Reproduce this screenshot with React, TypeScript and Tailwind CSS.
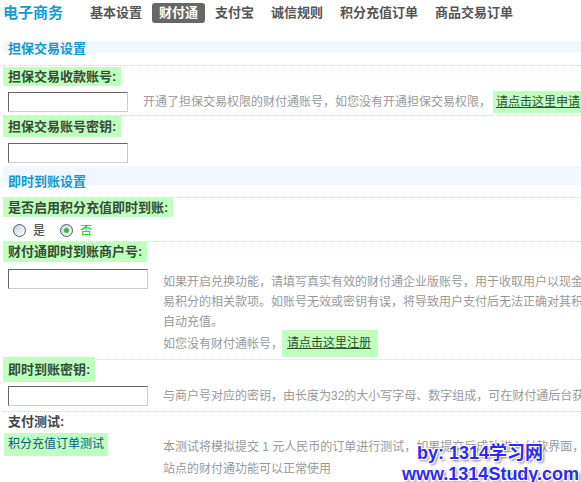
import React from "react";

const font = { fontFamily: '"Liberation Sans", "Noto Sans CJK SC", sans-serif' };

const tabs = ["基本设置", "财付通", "支付宝", "诚信规则", "积分充值订单", "商品交易订单"];

function Radio({ checked }: { checked?: boolean }) {
  return (
    <span className="flex h-[13px] w-[13px] items-center justify-center rounded-full border border-[#3f5c7a] bg-[linear-gradient(135deg,#c9d1da,#ffffff)]">
      {checked && <span className="h-[5px] w-[5px] rounded-full bg-[#34b834]" />}
    </span>
  );
}

function Input({ w }: { w: string }) {
  return (
    <input
      className={`${w} h-[20px] shrink-0 border border-t-[#666] border-l-[#666] border-r-[#ccc] border-b-[#ccc] bg-white outline-none`}
    />
  );
}

export default function App() {
  return (
    <div
      className="relative h-[482px] w-[581px] overflow-hidden bg-white text-[12px] text-[#999]"
      style={font}
    >
      {/* top bar */}
      <div className="flex items-start pt-[3px]">
        <div className="ml-[3px] text-[15px] font-bold leading-[20px] text-[#159ad2]">电子商务</div>
        <div className="ml-[20px] flex gap-[3px]">
          {tabs.map((t) => (
            <div
              key={t}
              className={`h-[20px] rounded-[3px] px-[7px] text-[13px] font-bold leading-[20px] ${
                t === "财付通" ? "bg-[#676767] text-white" : "text-[#555]"
              }`}
            >
              {t}
            </div>
          ))}
        </div>
      </div>

      <div className="ml-[3px]">
        {/* 担保交易设置 */}
        <div className="mt-[18px] h-[12px] bg-[#f2f7ff] pl-[5px]">
          <div className="whitespace-nowrap text-[13px] font-bold leading-[16px] text-[#1199cf]">担保交易设置</div>
        </div>

        <div className="mt-[12px] border-t border-dotted border-[#c6dcef]">
          <div className="mt-[1px] h-[19px] w-fit bg-[#c0ffc0] px-[5px] text-[13px] font-bold leading-[19px] text-[#354d35]">
            担保交易收款账号:
          </div>
          <div className="mt-[6px] flex h-[20px] items-center whitespace-nowrap">
            <div className="ml-[5px]">
              <Input w="w-[120px]" />
            </div>
            <span className="ml-[15px]">开通了担保交易权限的财付通账号，如您没有开通担保交易权限，</span>
            <span className="ml-[2px] h-[22px] bg-[#c0ffc0] px-[3px] leading-[22px] text-[#2f4f2f] underline">
              请点击这里申请
            </span>
          </div>
        </div>

        <div className="mt-[3px] border-t border-dotted border-[#c6dcef]">
          <div className="h-[21px] w-fit bg-[#c0ffc0] px-[5px] text-[13px] font-bold leading-[21px] text-[#354d35]">
            担保交易账号密钥:
          </div>
          <div className="ml-[5px] mt-[6px] flex">
            <Input w="w-[120px]" />
          </div>
        </div>

        {/* 即时到账设置 */}
        <div className="mt-[3px] h-[19px] bg-[#f2f7ff] pl-[5px]">
          <div className="whitespace-nowrap pt-[9px] text-[13px] font-bold leading-[13px] text-[#1199cf]">即时到账设置</div>
        </div>

        <div className="mt-[12px] border-t border-dotted border-[#c6dcef]">
          <div className="h-[19px] w-fit bg-[#c0ffc0] px-[5px] text-[13px] font-bold leading-[19px] text-[#354d35]">
            是否启用积分充值即时到账:
          </div>
          <div className="flex h-[24px] items-center pt-[3px]">
            <span className="ml-[10px]">
              <Radio />
            </span>
            <span className="ml-[7px] text-[#333]">是</span>
            <span className="ml-[15px]">
              <Radio checked />
            </span>
            <span className="ml-[7px] text-[#00cc00]">否</span>
          </div>
        </div>

        <div className="border-t border-dotted border-[#c6dcef]">
          <div className="h-[20px] w-fit bg-[#c0ffc0] px-[5px] text-[13px] font-bold leading-[20px] text-[#354d35]">
            财付通即时到账商户号:
          </div>
          <div className="mt-[7px] flex items-start whitespace-nowrap">
            <div className="flex w-[160px] shrink-0 pl-[5px]">
              <Input w="w-[140px]" />
            </div>
            <div>
              <div className="mt-[3px] leading-[20px]">
                如果开启兑换功能，请填写真实有效的财付通企业版账号，用于收取用户以现金兑换交
                <br />
                易积分的相关款项。如账号无效或密钥有误，将导致用户支付后无法正确对其积分账户进行
                <br />
                自动充值。
              </div>
              <div className="-mt-[2px] flex h-[27px] items-center">
                <span>如您没有财付通帐号，</span>
                <span className="-ml-[1px] h-[27px] bg-[#c0ffc0] pl-[5px] pr-[7px] leading-[27px] text-[#2f4f2f] underline">
                  请点击这里注册
                </span>
              </div>
            </div>
          </div>
        </div>

        <div className="mt-[2px] border-t border-dotted border-[#c6dcef]">
          <div className="-mt-[3px] h-[25px] w-fit bg-[#c0ffc0] px-[5px] text-[13px] font-bold leading-[25px] text-[#354d35]">
            即时到账密钥:
          </div>
          <div className="mt-[4px] flex h-[20px] items-center whitespace-nowrap">
            <div className="flex w-[160px] shrink-0 pl-[5px]">
              <Input w="w-[140px]" />
            </div>
            <span>与商户号对应的密钥，由长度为32的大小写字母、数字组成，可在财付通后台获取</span>
          </div>
        </div>

        <div className="mt-[5px] border-t border-dotted border-[#c6dcef]">
          <div className="h-[20px] px-[5px] text-[13px] font-bold leading-[20px] text-[#444]">支付测试:</div>
          <div className="mt-[1px] flex items-start whitespace-nowrap">
            <div className="w-[160px] shrink-0">
              <span className="ml-[1px] inline-block h-[23px] bg-[#c0ffc0] px-[4px] leading-[23px] text-[#005f87]">
                积分充值订单测试
              </span>
            </div>
            <div className="mt-[3px] leading-[22px]">
              本测试将模拟提交 1 元人民币的订单进行测试，如果提交后成功进入付款界面，说明
              <br />
              站点的财付通功能可以正常使用
            </div>
          </div>
        </div>
      </div>

      {/* watermark */}
      <div className="absolute left-[402px] top-[443px] whitespace-nowrap text-[18px] font-bold leading-[21px] text-[#2b2bf2] [text-shadow:1px_1px_0_#fff,-1px_-1px_0_#fff,1px_-1px_0_#fff,-1px_1px_0_#fff,2px_2px_3px_#777]">
        <div className="pl-[15px]">by: 1314学习网</div>
        <div>www.1314Study.com</div>
      </div>
    </div>
  );
}
